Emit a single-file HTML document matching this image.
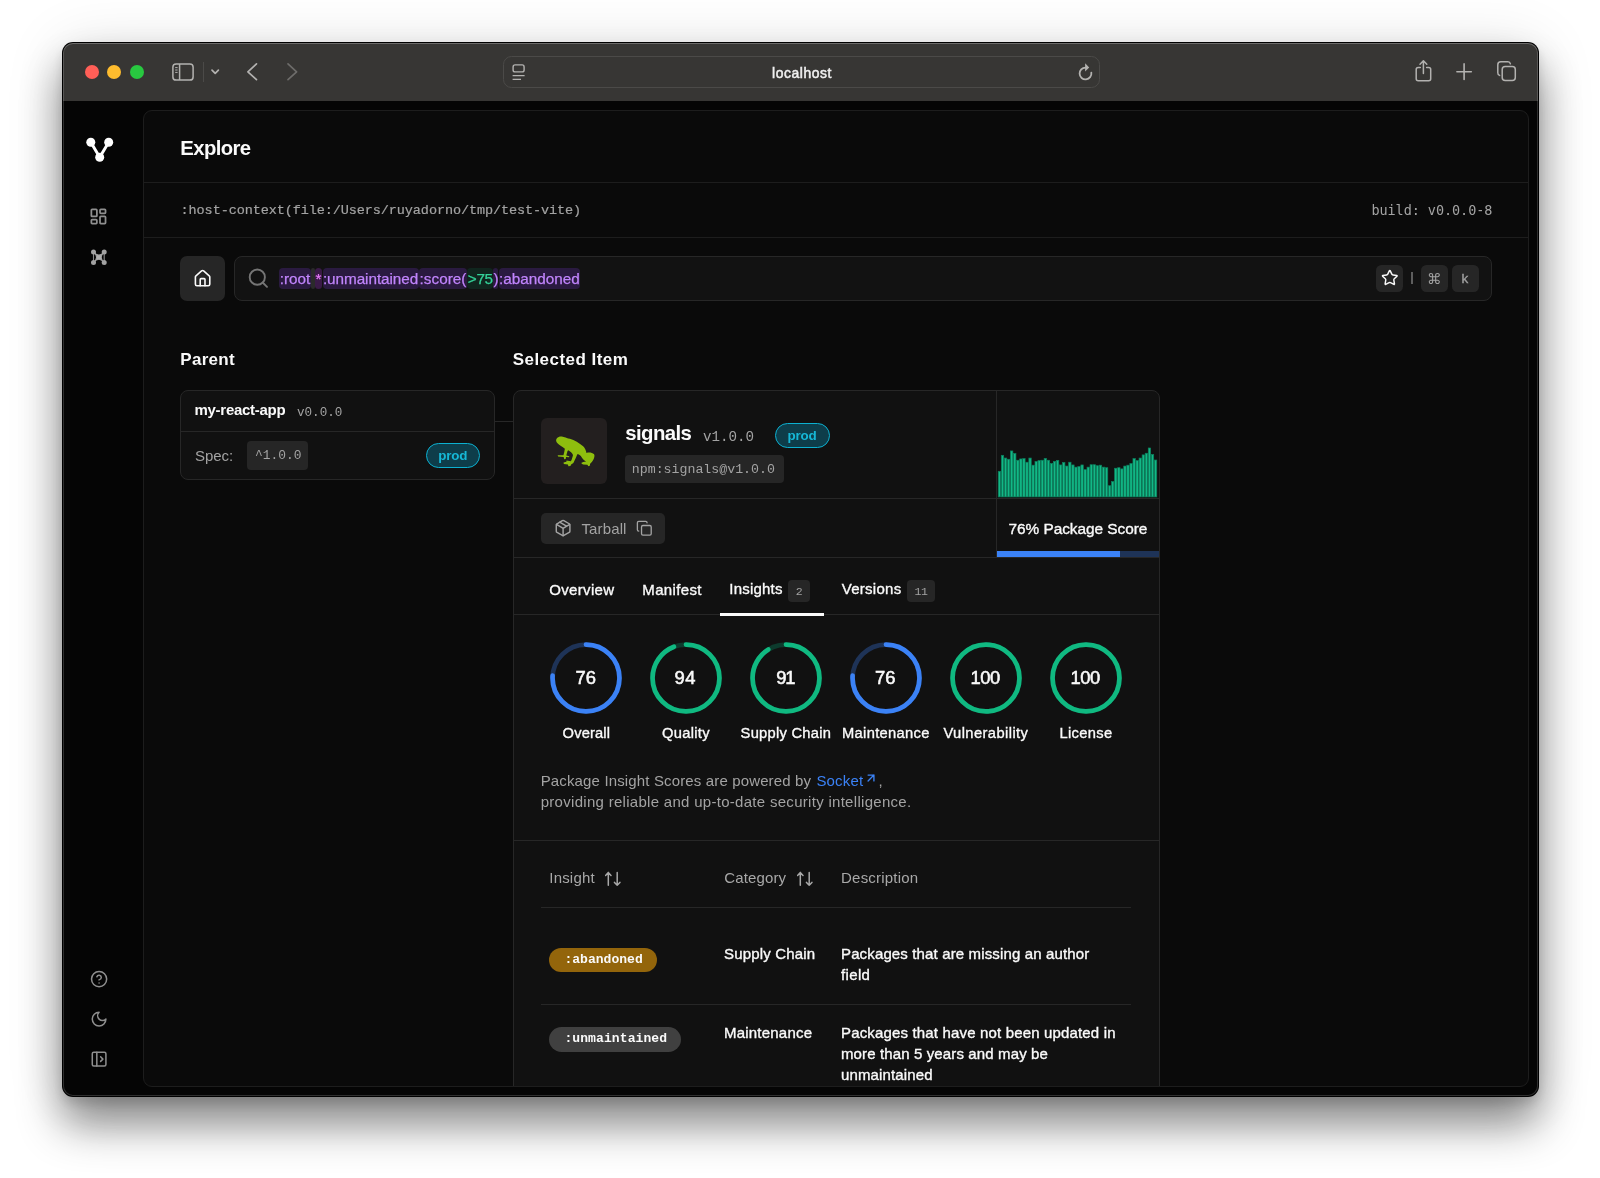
<!DOCTYPE html>
<html lang="en"><head><meta charset="utf-8"><title>Explore</title><style>
html,body{margin:0;padding:0;background:#fff;}
body{width:1600px;height:1178px;position:relative;overflow:hidden;font-family:"Liberation Sans",sans-serif;}
.b{position:absolute;display:block;}
.t{position:absolute;white-space:pre;display:block;}
#win{position:absolute;border-radius:11px;background:#000;box-shadow:0 28px 44px rgba(0,0,0,0.44),0 6px 12px rgba(0,0,0,0.12),0 4px 60px rgba(0,0,0,0.12);}
#root{position:absolute;left:0;top:0;width:1600px;height:1178px;will-change:transform;}
#main{box-sizing:border-box;background:#0a0a0a;border:1px solid #1d1d1d;border-radius:9px;}
</style></head>
<body>
<div id="root">
<div id="win" style="left:62px;top:42px;width:1477px;height:1054.8px;"></div>
<div class="b" style="left:63.00px;top:43.00px;width:1475.00px;height:57.80px;background:#373634;border-radius:10px 10px 0 0;"></div>
<div class="b" style="left:63.00px;top:100.80px;width:1475.00px;height:995.00px;background:#050505;border-radius:0 0 10px 10px;"></div>
<div class="b" style="left:85.10px;top:65.00px;width:14.00px;height:14.00px;background:#ff5f57;border-radius:7px;"></div>
<div class="b" style="left:107.30px;top:65.00px;width:14.00px;height:14.00px;background:#febc2e;border-radius:7px;"></div>
<div class="b" style="left:129.60px;top:65.00px;width:14.00px;height:14.00px;background:#28c840;border-radius:7px;"></div>
<svg class="b" style="left:171.00px;top:62.00px;width:24.00px;height:20.00px;" viewBox="171 62 24 20" fill="none"><rect x="172.9" y="63.9" width="20.2" height="16.2" rx="3.2" stroke="#b3b2b0" stroke-width="1.5"/><path d="M179.6 64v16" stroke="#b3b2b0" stroke-width="1.5"/><path d="M175.2 67.6h2.4M175.2 70h2.4M175.2 72.4h2.4" stroke="#b3b2b0" stroke-width="1" /></svg>
<div class="b" style="left:202.50px;top:62.00px;width:1.00px;height:20.00px;background:#4b4a48;"></div>
<svg class="b" style="left:209.00px;top:67.00px;width:13.00px;height:10.00px;" viewBox="209 67 13 10" fill="none"><path d="M212 70.2l3.2 3.2 3.2-3.2" stroke="#b3b2b0" stroke-width="1.7" stroke-linecap="round" stroke-linejoin="round"/></svg>
<svg class="b" style="left:244.00px;top:60.00px;width:16.00px;height:24.00px;" viewBox="244 60 16 24" fill="none"><path d="M256.5 63.9l-8.6 7.9 8.6 7.9" stroke="#b3b2b0" stroke-width="1.7" stroke-linecap="round" stroke-linejoin="round"/></svg>
<svg class="b" style="left:284.00px;top:60.00px;width:16.00px;height:24.00px;" viewBox="284 60 16 24" fill="none"><path d="M288 63.9l8.6 7.9-8.6 7.9" stroke="#6d6c6a" stroke-width="1.7" stroke-linecap="round" stroke-linejoin="round"/></svg>
<div class="b" style="left:502.50px;top:56.20px;width:597.20px;height:31.70px;background:#373634;border:1.3px solid #4b4a48;border-radius:8.5px;box-sizing:border-box;"></div>
<svg class="b" style="left:510.00px;top:62.00px;width:18.00px;height:20.00px;" viewBox="510 62 18 20" fill="none"><rect x="513.1" y="64.9" width="11" height="7" rx="2" stroke="#b3b2b0" stroke-width="1.4"/><path d="M512.6 75.7h12M512.6 79.3h8.4" stroke="#b3b2b0" stroke-width="1.3"/></svg>
<span id="localhost" class="t" style="left:772.00px;top:66.93px;font:400 13.9px/1 'Liberation Sans', sans-serif;color:#f0f0f0;letter-spacing:0.575px;-webkit-text-stroke:0.5px #f0f0f0;">localhost</span>
<svg class="b" style="left:1076.00px;top:60.00px;width:20.00px;height:24.00px;" viewBox="1076 60 20 24" fill="none"><path d="M1091.34 72.68A5.9 5.9 0 1 1 1085.5 67.6" stroke="#b3b2b0" stroke-width="1.8" stroke-linecap="round"/><path d="M1085.1 63.2L1089.2 67.4L1085.1 71.6Z" fill="#b3b2b0"/></svg>
<svg class="b" style="left:1412.00px;top:58.00px;width:24.00px;height:26.00px;" viewBox="1412 58 24 26" fill="none"><path d="M1420.3 67.5h-2.1a2 2 0 0 0-2 2v9.2a2 2 0 0 0 2 2h10.5a2 2 0 0 0 2-2v-9.2a2 2 0 0 0-2-2h-2.1" stroke="#b3b2b0" stroke-width="1.5" stroke-linecap="round"/><path d="M1423.4 73.6v-12.6M1420 64.2l3.4-3.4 3.4 3.4" stroke="#b3b2b0" stroke-width="1.5" stroke-linecap="round" stroke-linejoin="round"/></svg>
<svg class="b" style="left:1454.00px;top:60.00px;width:20.00px;height:24.00px;" viewBox="1454 60 20 24" fill="none"><path d="M1464.1 63.9v15.6M1456.9 71.7h14.4" stroke="#b3b2b0" stroke-width="1.6" stroke-linecap="round"/></svg>
<svg class="b" style="left:1494.00px;top:58.00px;width:26.00px;height:26.00px;" viewBox="1494 58 26 26" fill="none"><rect x="1502.2" y="66.4" width="13.1" height="14.1" rx="3" fill="#373634" stroke="#b3b2b0" stroke-width="1.5"/><path d="M1499.6 75.4a2.6 2.6 0 0 1-1.8-2.6v-8a3 3 0 0 1 3-3h7a2.6 2.6 0 0 1 2.6 2" stroke="#b3b2b0" stroke-width="1.5" stroke-linecap="round"/></svg>
<svg class="b" style="left:84.00px;top:134.00px;width:32.00px;height:32.00px;" viewBox="84 134 32 32" fill="none"><g fill="#fff" stroke="#fff"><path d="M90.8 142.3L99.7 157.2L108.7 142.3" stroke-width="3" fill="none" stroke-linejoin="round"/><circle cx="90.8" cy="142.3" r="4.5" stroke="none"/><circle cx="108.7" cy="142.3" r="4.5" stroke="none"/><circle cx="99.7" cy="157.3" r="4.5" stroke="none"/></g></svg>
<svg class="b" style="left:89.30px;top:207.45px;width:18.90px;height:18.90px;" viewBox="0 0 24 24" fill="none"><g stroke="#8f8f8f" stroke-width="2.25" stroke-linecap="round" stroke-linejoin="round"><rect width="7" height="9" x="3" y="3" rx="1"/><rect width="7" height="5" x="14" y="3" rx="1"/><rect width="7" height="9" x="14" y="12" rx="1"/><rect width="7" height="5" x="3" y="16" rx="1"/></g></svg>
<svg class="b" style="left:89.00px;top:247.00px;width:20.00px;height:20.00px;" viewBox="89 247 20 20" fill="none"><path d="M93.5 251.9Q98.85 258.5 104.2 251.9Q98 257.2 104.2 262.5Q98.85 255.9 93.5 262.5Q99.9 257.2 93.5 251.9Z" fill="#a2a2a2" stroke="#a2a2a2" stroke-width="1.3" stroke-linejoin="round"/><path d="M93.5 251.9V262.5M104.2 251.9V262.5" stroke="#8a8a8a" stroke-width="1.1"/><rect x="96.9" y="255.3" width="3.9" height="3.9" fill="#b0b0b0"/><g fill="#a2a2a2"><circle cx="93.5" cy="251.9" r="2.5"/><circle cx="104.2" cy="251.9" r="2.5"/><circle cx="93.5" cy="262.5" r="2.5"/><circle cx="104.2" cy="262.5" r="2.5"/></g></svg>
<svg class="b" style="left:89.75px;top:969.80px;width:18.20px;height:18.20px;" viewBox="0 0 24 24" fill="none"><g stroke="#8f8f8f" stroke-width="2" stroke-linecap="round" stroke-linejoin="round"><circle cx="12" cy="12" r="10"/><path d="M9.09 9a3 3 0 0 1 5.83 1c0 2-3 3-3 3"/><path d="M12 17h.01"/></g></svg>
<svg class="b" style="left:89.80px;top:1010.10px;width:18.20px;height:18.20px;" viewBox="0 0 24 24" fill="none"><g stroke="#8f8f8f" stroke-width="2" stroke-linecap="round" stroke-linejoin="round"><path d="M12 3a6 6 0 0 0 9 9 9 9 0 1 1-9-9Z"/></g></svg>
<svg class="b" style="left:89.65px;top:1050.10px;width:18.20px;height:18.20px;" viewBox="0 0 24 24" fill="none"><g stroke="#8f8f8f" stroke-width="2" stroke-linecap="round" stroke-linejoin="round"><rect width="18" height="18" x="3" y="3" rx="2"/><path d="M9 3v18"/><path d="m14 9 3 3-3 3"/></g></svg>
<div class="b" id="main" style="left:143.3px;top:110.2px;width:1385.5px;height:976.5999999999999px;"></div>
<div class="b" id="clip" style="left:144.3px;top:111.2px;width:1383.5px;height:974.5999999999999px;overflow:hidden;border-radius:8px;"><div class="b" style="left:-144.3px;top:-111.2px;width:1600px;height:1178px;">
<span id="explore" class="t" style="left:180.30px;top:138.32px;font:700 20.3px/1 'Liberation Sans', sans-serif;color:#fafafa;letter-spacing:-0.601px;">Explore</span>
<div class="b" style="left:143.30px;top:182.20px;width:1385.50px;height:1.00px;background:#1d1d1d;"></div>
<span id="hostctx" class="t" style="left:180.60px;top:204.05px;font:400 13.5px/1 'Liberation Mono', monospace;color:#a3a3a3;letter-spacing:-0.092px;-webkit-text-stroke:0.2px #a3a3a3;">:host-context(file:/Users/ruyadorno/tmp/test-vite)</span>
<span id="build" class="t" style="left:1371.40px;top:203.80px;font:400 13.5px/1 'DejaVu Sans Mono', 'Liberation Mono', monospace;color:#a3a3a3;letter-spacing:-0.061px;">build: v0.0.0-8</span>
<div class="b" style="left:143.30px;top:236.90px;width:1385.50px;height:1.00px;background:#1d1d1d;"></div>
<div class="b" style="left:180.25px;top:256.25px;width:44.50px;height:44.35px;background:#262626;border-radius:7px;"></div>
<svg class="b" style="left:192.80px;top:268.50px;width:19.20px;height:19.20px;" viewBox="0 0 24 24" fill="none"><g stroke="#fafafa" stroke-width="2" stroke-linecap="round" stroke-linejoin="round"><path d="M15 21v-8a1 1 0 0 0-1-1h-4a1 1 0 0 0-1 1v8"/><path d="M3 10a2 2 0 0 1 .709-1.528l7-5.999a2 2 0 0 1 2.582 0l7 5.999A2 2 0 0 1 21 10v9a2 2 0 0 1-2 2H5a2 2 0 0 1-2-2z"/></g></svg>
<div class="b" style="left:234.10px;top:256.25px;width:1257.80px;height:44.35px;background:#121212;border:1px solid #272727;border-radius:8px;box-sizing:border-box;"></div>
<svg class="b" style="left:247.00px;top:267.00px;width:23.00px;height:23.00px;" viewBox="247 267 23 23" fill="none"><circle cx="257.3" cy="277.15" r="7.6" stroke="#757575" stroke-width="1.9"/><path d="M262.9 282.75l4.1 4.1" stroke="#757575" stroke-width="1.9" stroke-linecap="round"/></svg>
<div class="b" style="left:279.40px;top:268.00px;width:31.20px;height:21.20px;background:#2a1a40;border-radius:4px;"></div>
<div class="b" style="left:311.20px;top:268.00px;width:3.80px;height:21.20px;background:#2a2a2a;border-radius:4px;"></div>
<div class="b" style="left:315.00px;top:268.00px;width:7.00px;height:21.20px;background:#3a1a47;border-radius:4px;"></div>
<div class="b" style="left:322.50px;top:268.00px;width:96.10px;height:21.20px;background:#2a1a40;border-radius:4px;"></div>
<div class="b" style="left:419.20px;top:268.00px;width:47.60px;height:21.20px;background:#2a1a40;border-radius:4px;"></div>
<div class="b" style="left:467.40px;top:268.00px;width:25.80px;height:21.20px;background:#10261e;border-radius:4px;"></div>
<div class="b" style="left:493.20px;top:268.00px;width:5.00px;height:21.20px;background:#2a1a40;border-radius:4px;"></div>
<div class="b" style="left:498.70px;top:268.00px;width:81.50px;height:21.20px;background:#2a1a40;border-radius:4px;"></div>
<span id="q0" class="t" style="left:279.80px;top:270.65px;font:400 15.3px/1 'Liberation Sans', sans-serif;color:#c084fc;letter-spacing:-0.042px;-webkit-text-stroke:0.25px #c084fc;">:root</span>
<span id="q2" class="t" style="left:315.40px;top:270.65px;font:400 15.3px/1 'Liberation Sans', sans-serif;color:#e879f9;letter-spacing:0.247px;-webkit-text-stroke:0.25px #e879f9;">*</span>
<span id="q3" class="t" style="left:322.90px;top:270.65px;font:400 15.3px/1 'Liberation Sans', sans-serif;color:#c084fc;letter-spacing:-0.062px;-webkit-text-stroke:0.25px #c084fc;">:unmaintained</span>
<span id="q4" class="t" style="left:419.60px;top:270.65px;font:400 15.3px/1 'Liberation Sans', sans-serif;color:#c084fc;letter-spacing:0.007px;-webkit-text-stroke:0.25px #c084fc;">:score(</span>
<span id="q5" class="t" style="left:467.80px;top:270.65px;font:400 15.3px/1 'Liberation Sans', sans-serif;color:#34d399;letter-spacing:-0.318px;-webkit-text-stroke:0.25px #34d399;">&gt;75</span>
<span id="q6" class="t" style="left:493.60px;top:270.65px;font:400 15.3px/1 'Liberation Sans', sans-serif;color:#c084fc;letter-spacing:-0.909px;-webkit-text-stroke:0.25px #c084fc;">)</span>
<span id="q7" class="t" style="left:499.10px;top:270.65px;font:400 15.3px/1 'Liberation Sans', sans-serif;color:#c084fc;letter-spacing:-0.013px;-webkit-text-stroke:0.25px #c084fc;">:abandoned</span>
<div class="b" style="left:1376.25px;top:265.00px;width:26.65px;height:26.50px;background:#262626;border-radius:5.5px;"></div>
<svg class="b" style="left:1381.00px;top:269.30px;width:17.60px;height:17.60px;" viewBox="0 0 24 24" fill="none"><g stroke="#fafafa" stroke-width="2" stroke-linecap="round" stroke-linejoin="round"><path d="M11.525 2.295a.53.53 0 0 1 .95 0l2.31 4.679a2.123 2.123 0 0 0 1.595 1.16l5.166.756a.53.53 0 0 1 .294.904l-3.736 3.638a2.123 2.123 0 0 0-.611 1.878l.882 5.14a.53.53 0 0 1-.771.56l-4.618-2.428a2.122 2.122 0 0 0-1.973 0L6.396 21.01a.53.53 0 0 1-.77-.56l.881-5.139a2.122 2.122 0 0 0-.611-1.879L2.16 9.795a.53.53 0 0 1 .294-.906l5.165-.755a2.122 2.122 0 0 0 1.597-1.16z"/></g></svg>
<div class="b" style="left:1411.25px;top:271.90px;width:1.30px;height:12.50px;background:#5e5e5e;"></div>
<div class="b" style="left:1421.00px;top:265.00px;width:26.50px;height:26.50px;background:#262626;border-radius:5.5px;"></div>
<div class="b" style="left:1452.10px;top:265.00px;width:26.65px;height:26.50px;background:#262626;border-radius:5.5px;"></div>
<span id="cmd" class="t" style="left:1427.00px;top:271.92px;font:400 14.6px/1 'DejaVu Sans', sans-serif;color:#a3a3a3;">⌘</span>
<span id="kk" class="t" style="left:1461.60px;top:271.67px;font:400 13.5px/1 'Liberation Sans', sans-serif;color:#a3a3a3;-webkit-text-stroke:0.3px #a3a3a3;">k</span>
<span id="parent" class="t" style="left:180.30px;top:350.91px;font:700 17px/1 'Liberation Sans', sans-serif;color:#fafafa;letter-spacing:0.280px;">Parent</span>
<span id="selitem" class="t" style="left:512.70px;top:350.91px;font:700 17px/1 'Liberation Sans', sans-serif;color:#fafafa;letter-spacing:0.461px;">Selected Item</span>
<div class="b" style="left:180.20px;top:390.00px;width:314.50px;height:90.30px;background:#111111;border:1px solid #272727;border-radius:8px;box-sizing:border-box;"></div>
<div class="b" style="left:181.00px;top:430.70px;width:313.00px;height:1.00px;background:#272727;"></div>
<span id="myreact" class="t" style="left:194.50px;top:402.20px;font:700 15px/1 'Liberation Sans', sans-serif;color:#fafafa;letter-spacing:-0.284px;">my-react-app</span>
<span id="v000" class="t" style="left:297.00px;top:406.54px;font:400 12.6px/1 'Liberation Mono', monospace;color:#a3a3a3;letter-spacing:-0.010px;">v0.0.0</span>
<span id="spec" class="t" style="left:195.00px;top:448.40px;font:400 15px/1 'Liberation Sans', sans-serif;color:#a3a3a3;letter-spacing:-0.032px;">Spec:</span>
<div class="b" style="left:247.00px;top:441.40px;width:61.30px;height:28.30px;background:#262626;border-radius:4px;"></div>
<span id="caret" class="t" style="left:254.90px;top:449.51px;font:400 12.9px/1 'Liberation Mono', monospace;color:#a3a3a3;letter-spacing:0.030px;">^1.0.0</span>
<div class="b" style="left:425.50px;top:443.00px;width:54.70px;height:24.90px;background:#0e3d4a;border:1.6px solid #0cb0d0;border-radius:13px;box-sizing:border-box;"></div>
<span id="prod1" class="t" style="left:438.30px;top:449.06px;font:700 13.4px/1 'Liberation Sans', sans-serif;color:#16b7d6;letter-spacing:-0.188px;">prod</span>
<div class="b" style="left:494.70px;top:421.20px;width:18.30px;height:1.00px;background:#272727;"></div>
<div class="b" style="left:513.00px;top:390.00px;width:646.50px;height:810.00px;background:#111111;border:1px solid #272727;border-radius:8px;box-sizing:border-box;"></div>
<div class="b" style="left:996.00px;top:391.00px;width:1.00px;height:166.40px;background:#272727;"></div>
<div class="b" style="left:514.00px;top:498.00px;width:645.00px;height:1.00px;background:#272727;"></div>
<div class="b" style="left:514.00px;top:557.00px;width:645.00px;height:1.00px;background:#272727;"></div>
<div class="b" style="left:541.10px;top:418.30px;width:65.70px;height:65.90px;background:#231f1f;border-radius:6px;"></div>
<svg class="b" style="left:548.00px;top:428.00px;width:54.00px;height:46.00px;" viewBox="0 0 1383 1178" fill="none"><path d="M330 215C400 215 440 245 560 275C680 310 800 380 900 470C950 520 975 590 985 640C1040 620 1130 625 1180 670C1200 700 1190 760 1150 830C1120 880 1085 900 1075 920L1078 960L1035 978L1008 938L900 932L862 918L858 893L905 872L975 858C920 830 870 770 840 715C810 685 775 668 750 672C730 720 700 800 650 895L592 932L575 975L522 978L510 932L405 922L398 882L470 862L476 830L585 852C615 800 635 720 640 690C620 640 570 600 520 572L500 590C485 640 478 680 470 702L545 722L540 752L462 742L452 795L418 800L400 742L258 732L248 700L395 698C410 640 425 580 432 530C370 490 290 440 250 400C200 350 190 290 240 250C270 225 300 215 330 215Z" fill="#8ebe0e"/></svg>
<span id="signals" class="t" style="left:625.20px;top:422.83px;font:700 20.4px/1 'Liberation Sans', sans-serif;color:#fafafa;letter-spacing:-0.581px;">signals</span>
<span id="v100" class="t" style="left:702.90px;top:430.22px;font:400 14.2px/1 'Liberation Mono', monospace;color:#a3a3a3;letter-spacing:0.018px;">v1.0.0</span>
<div class="b" style="left:774.90px;top:423.10px;width:55.00px;height:24.90px;background:#0e3d4a;border:1.6px solid #0cb0d0;border-radius:13px;box-sizing:border-box;"></div>
<span id="prod2" class="t" style="left:787.40px;top:429.26px;font:700 13.4px/1 'Liberation Sans', sans-serif;color:#16b7d6;letter-spacing:-0.138px;">prod</span>
<div class="b" style="left:624.90px;top:454.60px;width:158.80px;height:28.60px;background:#262626;border-radius:4px;"></div>
<span id="npm" class="t" style="left:631.80px;top:462.84px;font:400 13.25px/1 'Liberation Mono', monospace;color:#a3a3a3;letter-spacing:-0.001px;">npm:signals@v1.0.0</span>
<div class="b" style="left:540.90px;top:513.00px;width:124.60px;height:30.75px;background:#262626;border-radius:5px;"></div>
<svg class="b" style="left:553.70px;top:519.10px;width:18.20px;height:18.20px;" viewBox="0 0 24 24" fill="none"><g stroke="#a3a3a3" stroke-width="1.9" stroke-linecap="round" stroke-linejoin="round"><path d="M11 21.73a2 2 0 0 0 2 0l7-4A2 2 0 0 0 21 16V8a2 2 0 0 0-1-1.73l-7-4a2 2 0 0 0-2 0l-7 4A2 2 0 0 0 3 8v8a2 2 0 0 0 1 1.73z"/><path d="M12 22V12"/><path d="m3.3 7 7.703 4.734a2 2 0 0 0 1.994 0L20.7 7"/><path d="m7.500 4.270 9 5.150"/></g></svg>
<span id="tarball" class="t" style="left:581.40px;top:521.10px;font:400 15px/1 'Liberation Sans', sans-serif;color:#a3a3a3;letter-spacing:0.145px;">Tarball</span>
<svg class="b" style="left:635.80px;top:519.80px;width:16.60px;height:16.60px;" viewBox="0 0 24 24" fill="none"><g stroke="#a3a3a3" stroke-width="1.9" stroke-linecap="round" stroke-linejoin="round"><rect width="14" height="14" x="8" y="8" rx="2" ry="2"/><path d="M4 16c-1.100 0-2-.9-2-2V4c0-1.100.9-2 2-2h10c1.100 0 2 .9 2 2"/></g></svg>
<svg class="b" style="left:997.00px;top:430.00px;width:162.00px;height:68.00px;" viewBox="997 430 162 68" fill="none"><rect x="998.25" y="471.30" width="2.36" height="25.60" fill="#12b886" stroke="#0c7f5d" stroke-width="0.7"/><rect x="1001.31" y="455.32" width="2.36" height="41.58" fill="#12b886" stroke="#0c7f5d" stroke-width="0.7"/><rect x="1004.37" y="458.06" width="2.36" height="38.84" fill="#12b886" stroke="#0c7f5d" stroke-width="0.7"/><rect x="1007.43" y="459.26" width="2.36" height="37.64" fill="#12b886" stroke="#0c7f5d" stroke-width="0.7"/><rect x="1010.50" y="450.95" width="2.36" height="45.95" fill="#12b886" stroke="#0c7f5d" stroke-width="0.7"/><rect x="1013.56" y="453.46" width="2.36" height="43.44" fill="#12b886" stroke="#0c7f5d" stroke-width="0.7"/><rect x="1016.62" y="460.25" width="2.36" height="36.65" fill="#12b886" stroke="#0c7f5d" stroke-width="0.7"/><rect x="1019.68" y="458.94" width="2.36" height="37.96" fill="#12b886" stroke="#0c7f5d" stroke-width="0.7"/><rect x="1022.74" y="458.61" width="2.36" height="38.29" fill="#12b886" stroke="#0c7f5d" stroke-width="0.7"/><rect x="1025.80" y="462.22" width="2.36" height="34.68" fill="#12b886" stroke="#0c7f5d" stroke-width="0.7"/><rect x="1028.87" y="458.06" width="2.36" height="38.84" fill="#12b886" stroke="#0c7f5d" stroke-width="0.7"/><rect x="1031.93" y="465.17" width="2.36" height="31.73" fill="#12b886" stroke="#0c7f5d" stroke-width="0.7"/><rect x="1034.99" y="461.45" width="2.36" height="35.45" fill="#12b886" stroke="#0c7f5d" stroke-width="0.7"/><rect x="1038.05" y="460.58" width="2.36" height="36.32" fill="#12b886" stroke="#0c7f5d" stroke-width="0.7"/><rect x="1041.11" y="460.25" width="2.36" height="36.65" fill="#12b886" stroke="#0c7f5d" stroke-width="0.7"/><rect x="1044.17" y="458.39" width="2.36" height="38.51" fill="#12b886" stroke="#0c7f5d" stroke-width="0.7"/><rect x="1047.23" y="460.25" width="2.36" height="36.65" fill="#12b886" stroke="#0c7f5d" stroke-width="0.7"/><rect x="1050.30" y="463.53" width="2.36" height="33.37" fill="#12b886" stroke="#0c7f5d" stroke-width="0.7"/><rect x="1053.36" y="461.45" width="2.36" height="35.45" fill="#12b886" stroke="#0c7f5d" stroke-width="0.7"/><rect x="1056.42" y="460.36" width="2.36" height="36.54" fill="#12b886" stroke="#0c7f5d" stroke-width="0.7"/><rect x="1059.48" y="464.95" width="2.36" height="31.95" fill="#12b886" stroke="#0c7f5d" stroke-width="0.7"/><rect x="1062.54" y="462.44" width="2.36" height="34.46" fill="#12b886" stroke="#0c7f5d" stroke-width="0.7"/><rect x="1065.60" y="466.05" width="2.36" height="30.85" fill="#12b886" stroke="#0c7f5d" stroke-width="0.7"/><rect x="1068.67" y="462.22" width="2.36" height="34.68" fill="#12b886" stroke="#0c7f5d" stroke-width="0.7"/><rect x="1071.73" y="464.95" width="2.36" height="31.95" fill="#12b886" stroke="#0c7f5d" stroke-width="0.7"/><rect x="1074.79" y="467.14" width="2.36" height="29.76" fill="#12b886" stroke="#0c7f5d" stroke-width="0.7"/><rect x="1077.85" y="466.59" width="2.36" height="30.31" fill="#12b886" stroke="#0c7f5d" stroke-width="0.7"/><rect x="1080.91" y="464.95" width="2.36" height="31.95" fill="#12b886" stroke="#0c7f5d" stroke-width="0.7"/><rect x="1083.97" y="469.66" width="2.36" height="27.24" fill="#12b886" stroke="#0c7f5d" stroke-width="0.7"/><rect x="1087.03" y="467.14" width="2.36" height="29.76" fill="#12b886" stroke="#0c7f5d" stroke-width="0.7"/><rect x="1090.10" y="464.73" width="2.36" height="32.17" fill="#12b886" stroke="#0c7f5d" stroke-width="0.7"/><rect x="1093.16" y="464.73" width="2.36" height="32.17" fill="#12b886" stroke="#0c7f5d" stroke-width="0.7"/><rect x="1096.22" y="465.72" width="2.36" height="31.18" fill="#12b886" stroke="#0c7f5d" stroke-width="0.7"/><rect x="1099.28" y="465.17" width="2.36" height="31.73" fill="#12b886" stroke="#0c7f5d" stroke-width="0.7"/><rect x="1102.34" y="467.14" width="2.36" height="29.76" fill="#12b886" stroke="#0c7f5d" stroke-width="0.7"/><rect x="1105.40" y="467.69" width="2.36" height="29.21" fill="#12b886" stroke="#0c7f5d" stroke-width="0.7"/><rect x="1108.47" y="485.74" width="2.36" height="11.16" fill="#12b886" stroke="#0c7f5d" stroke-width="0.7"/><rect x="1111.53" y="481.58" width="2.36" height="15.32" fill="#12b886" stroke="#0c7f5d" stroke-width="0.7"/><rect x="1114.59" y="468.23" width="2.36" height="28.67" fill="#12b886" stroke="#0c7f5d" stroke-width="0.7"/><rect x="1117.65" y="467.69" width="2.36" height="29.21" fill="#12b886" stroke="#0c7f5d" stroke-width="0.7"/><rect x="1120.71" y="468.89" width="2.36" height="28.01" fill="#12b886" stroke="#0c7f5d" stroke-width="0.7"/><rect x="1123.77" y="466.05" width="2.36" height="30.85" fill="#12b886" stroke="#0c7f5d" stroke-width="0.7"/><rect x="1126.83" y="465.17" width="2.36" height="31.73" fill="#12b886" stroke="#0c7f5d" stroke-width="0.7"/><rect x="1129.90" y="463.53" width="2.36" height="33.37" fill="#12b886" stroke="#0c7f5d" stroke-width="0.7"/><rect x="1132.96" y="458.61" width="2.36" height="38.29" fill="#12b886" stroke="#0c7f5d" stroke-width="0.7"/><rect x="1136.02" y="460.58" width="2.36" height="36.32" fill="#12b886" stroke="#0c7f5d" stroke-width="0.7"/><rect x="1139.08" y="458.06" width="2.36" height="38.84" fill="#12b886" stroke="#0c7f5d" stroke-width="0.7"/><rect x="1142.14" y="454.89" width="2.36" height="42.01" fill="#12b886" stroke="#0c7f5d" stroke-width="0.7"/><rect x="1145.20" y="453.25" width="2.36" height="43.65" fill="#12b886" stroke="#0c7f5d" stroke-width="0.7"/><rect x="1148.27" y="447.99" width="2.36" height="48.91" fill="#12b886" stroke="#0c7f5d" stroke-width="0.7"/><rect x="1151.33" y="454.56" width="2.36" height="42.34" fill="#12b886" stroke="#0c7f5d" stroke-width="0.7"/><rect x="1154.39" y="460.03" width="2.36" height="36.87" fill="#12b886" stroke="#0c7f5d" stroke-width="0.7"/></svg>
<span id="score" class="t" style="left:1008.50px;top:520.96px;font:400 15.4px/1 'Liberation Sans', sans-serif;color:#fafafa;letter-spacing:-0.039px;-webkit-text-stroke:0.35px #fafafa;">76% Package Score</span>
<div class="b" style="left:997.00px;top:550.70px;width:162.00px;height:6.50px;background:#1e3357;"></div>
<div class="b" style="left:997.00px;top:550.70px;width:122.90px;height:6.50px;background:#3b82f6;"></div>
<span id="tab1" class="t" style="left:549.30px;top:582.20px;font:400 15px/1 'Liberation Sans', sans-serif;color:#fafafa;letter-spacing:0.323px;-webkit-text-stroke:0.35px #fafafa;">Overview</span>
<span id="tab2" class="t" style="left:642.30px;top:582.20px;font:400 15px/1 'Liberation Sans', sans-serif;color:#fafafa;letter-spacing:0.362px;-webkit-text-stroke:0.35px #fafafa;">Manifest</span>
<span id="tab3" class="t" style="left:729.30px;top:581.30px;font:400 15px/1 'Liberation Sans', sans-serif;color:#fafafa;letter-spacing:0.212px;-webkit-text-stroke:0.35px #fafafa;">Insights</span>
<div class="b" style="left:788.40px;top:580.00px;width:21.90px;height:21.60px;background:#262626;border-radius:4px;"></div>
<span id="tab3n" class="t" style="left:795.70px;top:586.19px;font:400 11.5px/1 'Liberation Mono', monospace;color:#a3a3a3;letter-spacing:-0.406px;">2</span>
<span id="tab4" class="t" style="left:841.80px;top:581.30px;font:400 15px/1 'Liberation Sans', sans-serif;color:#fafafa;letter-spacing:0.257px;-webkit-text-stroke:0.35px #fafafa;">Versions</span>
<div class="b" style="left:906.90px;top:580.00px;width:28.40px;height:21.60px;background:#262626;border-radius:4px;"></div>
<span id="tab4n" class="t" style="left:914.40px;top:586.19px;font:400 11.5px/1 'Liberation Mono', monospace;color:#a3a3a3;letter-spacing:-0.206px;">11</span>
<div class="b" style="left:514.00px;top:613.70px;width:645.00px;height:1.00px;background:#272727;"></div>
<div class="b" style="left:720.20px;top:613.10px;width:103.80px;height:2.50px;background:#fafafa;"></div>
<svg class="b" style="left:546.40px;top:637.80px;width:80.00px;height:80.00px;" viewBox="546.4 637.8 80 80" fill="none"><circle cx="586.4" cy="677.8" r="33.45" stroke="#1e3357" stroke-width="4.7"/><circle cx="586.4" cy="677.8" r="33.45" stroke="#3b82f6" stroke-width="4.7" stroke-linecap="round" stroke-dasharray="159.73 210.17" transform="rotate(-90 586.4 677.8)"/></svg>
<span id="g1n" class="t" style="left:575.60px;top:668.82px;font:400 18.4px/1 'Liberation Sans', sans-serif;color:#fafafa;letter-spacing:-0.134px;-webkit-text-stroke:0.55px #fafafa;">76</span>
<span id="g1l" class="t" style="left:562.60px;top:725.76px;font:400 14.7px/1 'Liberation Sans', sans-serif;color:#fafafa;letter-spacing:0.153px;-webkit-text-stroke:0.35px #fafafa;">Overall</span>
<svg class="b" style="left:645.90px;top:637.80px;width:80.00px;height:80.00px;" viewBox="645.9 637.8 80 80" fill="none"><circle cx="685.9" cy="677.8" r="33.45" stroke="#0d3b2d" stroke-width="4.7"/><circle cx="685.9" cy="677.8" r="33.45" stroke="#10b981" stroke-width="4.7" stroke-linecap="round" stroke-dasharray="197.56 210.17" transform="rotate(-90 685.9 677.8)"/></svg>
<span id="g2n" class="t" style="left:674.45px;top:668.82px;font:400 18.4px/1 'Liberation Sans', sans-serif;color:#fafafa;letter-spacing:0.516px;-webkit-text-stroke:0.55px #fafafa;">94</span>
<span id="g2l" class="t" style="left:661.95px;top:725.76px;font:400 14.7px/1 'Liberation Sans', sans-serif;color:#fafafa;letter-spacing:0.312px;-webkit-text-stroke:0.35px #fafafa;">Quality</span>
<svg class="b" style="left:745.90px;top:637.80px;width:80.00px;height:80.00px;" viewBox="745.9 637.8 80 80" fill="none"><circle cx="785.9" cy="677.8" r="33.45" stroke="#0d3b2d" stroke-width="4.7"/><circle cx="785.9" cy="677.8" r="33.45" stroke="#10b981" stroke-width="4.7" stroke-linecap="round" stroke-dasharray="191.26 210.17" transform="rotate(-90 785.9 677.8)"/></svg>
<span id="g3n" class="t" style="left:776.20px;top:668.82px;font:400 18.4px/1 'Liberation Sans', sans-serif;color:#fafafa;letter-spacing:-1.234px;-webkit-text-stroke:0.55px #fafafa;">91</span>
<span id="g3l" class="t" style="left:740.60px;top:725.76px;font:400 14.7px/1 'Liberation Sans', sans-serif;color:#fafafa;letter-spacing:0.269px;-webkit-text-stroke:0.35px #fafafa;">Supply Chain</span>
<svg class="b" style="left:845.90px;top:637.80px;width:80.00px;height:80.00px;" viewBox="845.9 637.8 80 80" fill="none"><circle cx="885.9" cy="677.8" r="33.45" stroke="#1e3357" stroke-width="4.7"/><circle cx="885.9" cy="677.8" r="33.45" stroke="#3b82f6" stroke-width="4.7" stroke-linecap="round" stroke-dasharray="159.73 210.17" transform="rotate(-90 885.9 677.8)"/></svg>
<span id="g4n" class="t" style="left:875.10px;top:668.82px;font:400 18.4px/1 'Liberation Sans', sans-serif;color:#fafafa;letter-spacing:-0.134px;-webkit-text-stroke:0.55px #fafafa;">76</span>
<span id="g4l" class="t" style="left:842.00px;top:725.76px;font:400 14.7px/1 'Liberation Sans', sans-serif;color:#fafafa;letter-spacing:0.336px;-webkit-text-stroke:0.35px #fafafa;">Maintenance</span>
<svg class="b" style="left:945.90px;top:637.80px;width:80.00px;height:80.00px;" viewBox="945.9 637.8 80 80" fill="none"><circle cx="985.9" cy="677.8" r="33.45" stroke="#0d3b2d" stroke-width="4.7"/><circle cx="985.9" cy="677.8" r="33.45" stroke="#10b981" stroke-width="4.7"/></svg>
<span id="g5n" class="t" style="left:970.40px;top:668.82px;font:400 18.4px/1 'Liberation Sans', sans-serif;color:#fafafa;letter-spacing:-0.362px;-webkit-text-stroke:0.55px #fafafa;">100</span>
<span id="g5l" class="t" style="left:943.40px;top:725.76px;font:400 14.7px/1 'Liberation Sans', sans-serif;color:#fafafa;letter-spacing:0.425px;-webkit-text-stroke:0.35px #fafafa;">Vulnerability</span>
<svg class="b" style="left:1045.90px;top:637.80px;width:80.00px;height:80.00px;" viewBox="1045.9 637.8 80 80" fill="none"><circle cx="1085.9" cy="677.8" r="33.45" stroke="#0d3b2d" stroke-width="4.7"/><circle cx="1085.9" cy="677.8" r="33.45" stroke="#10b981" stroke-width="4.7"/></svg>
<span id="g6n" class="t" style="left:1070.40px;top:668.82px;font:400 18.4px/1 'Liberation Sans', sans-serif;color:#fafafa;letter-spacing:-0.362px;-webkit-text-stroke:0.55px #fafafa;">100</span>
<span id="g6l" class="t" style="left:1059.40px;top:725.76px;font:400 14.7px/1 'Liberation Sans', sans-serif;color:#fafafa;letter-spacing:0.339px;-webkit-text-stroke:0.35px #fafafa;">License</span>
<span id="p1a" class="t" style="left:540.70px;top:773.10px;font:400 15px/1 'Liberation Sans', sans-serif;color:#a3a3a3;letter-spacing:0.144px;">Package Insight Scores are powered by</span>
<span id="p1b" class="t" style="left:816.40px;top:773.10px;font:400 15px/1 'Liberation Sans', sans-serif;color:#3b82f6;letter-spacing:0.173px;">Socket</span>
<svg class="b" style="left:863.60px;top:771.40px;width:14.00px;height:14.00px;" viewBox="0 0 24 24" fill="none"><path d="M7 7h10v10M7 17L17 7" stroke="#3b82f6" stroke-width="2.3" stroke-linecap="round" stroke-linejoin="round"/></svg>
<span id="p1c" class="t" style="left:878.60px;top:773.10px;font:400 15px/1 'Liberation Sans', sans-serif;color:#a3a3a3;">,</span>
<span id="p2" class="t" style="left:540.70px;top:794.20px;font:400 15px/1 'Liberation Sans', sans-serif;color:#a3a3a3;letter-spacing:0.292px;">providing reliable and up-to-date security intelligence.</span>
<div class="b" style="left:514.00px;top:839.70px;width:645.00px;height:1.00px;background:#272727;"></div>
<span id="th1" class="t" style="left:549.30px;top:870.40px;font:400 15px/1 'Liberation Sans', sans-serif;color:#a8a8a8;letter-spacing:0.185px;">Insight</span>
<svg class="b" style="left:605.20px;top:871.00px;width:16.00px;height:16.00px;" viewBox="0 0 16 16" fill="none"><path d="M3.3 14.2V1.6M0.6 4.4L3.3 1.6L6 4.4M12.2 1.6v12.6M9.5 11.4l2.7 2.8 2.7-2.8" stroke="#a8a8a8" stroke-width="1.5" stroke-linecap="round" stroke-linejoin="round"/></svg>
<span id="th2" class="t" style="left:724.20px;top:870.40px;font:400 15px/1 'Liberation Sans', sans-serif;color:#a8a8a8;letter-spacing:0.153px;">Category</span>
<svg class="b" style="left:796.90px;top:871.00px;width:16.00px;height:16.00px;" viewBox="0 0 16 16" fill="none"><path d="M3.3 14.2V1.6M0.6 4.4L3.3 1.6L6 4.4M12.2 1.6v12.6M9.5 11.4l2.7 2.8 2.7-2.8" stroke="#a8a8a8" stroke-width="1.5" stroke-linecap="round" stroke-linejoin="round"/></svg>
<span id="th3" class="t" style="left:841.10px;top:870.40px;font:400 15px/1 'Liberation Sans', sans-serif;color:#a8a8a8;letter-spacing:0.197px;">Description</span>
<div class="b" style="left:540.60px;top:906.50px;width:590.90px;height:1.00px;background:#272727;"></div>
<div class="b" style="left:549.20px;top:947.80px;width:107.40px;height:24.50px;background:#93650b;border-radius:12.5px;"></div>
<span id="b1" class="t" style="left:564.40px;top:953.00px;font:700 13.05px/1 'Liberation Mono', monospace;color:#fafafa;letter-spacing:0.010px;">:abandoned</span>
<span id="r1c" class="t" style="left:724.00px;top:946.40px;font:400 15px/1 'Liberation Sans', sans-serif;color:#fafafa;letter-spacing:0.164px;-webkit-text-stroke:0.35px #fafafa;">Supply Chain</span>
<span id="r1d1" class="t" style="left:841.00px;top:946.40px;font:400 15px/1 'Liberation Sans', sans-serif;color:#fafafa;letter-spacing:0.138px;-webkit-text-stroke:0.35px #fafafa;">Packages that are missing an author</span>
<span id="r1d2" class="t" style="left:841.00px;top:967.30px;font:400 15px/1 'Liberation Sans', sans-serif;color:#fafafa;letter-spacing:0.354px;-webkit-text-stroke:0.35px #fafafa;">field</span>
<div class="b" style="left:540.60px;top:1003.90px;width:590.90px;height:1.00px;background:#272727;"></div>
<div class="b" style="left:549.20px;top:1027.00px;width:131.90px;height:24.60px;background:#404040;border-radius:12.5px;"></div>
<span id="b2" class="t" style="left:564.40px;top:1032.20px;font:700 13.05px/1 'Liberation Mono', monospace;color:#fafafa;letter-spacing:0.077px;">:unmaintained</span>
<span id="r2c" class="t" style="left:724.00px;top:1025.40px;font:400 15px/1 'Liberation Sans', sans-serif;color:#fafafa;letter-spacing:0.209px;-webkit-text-stroke:0.35px #fafafa;">Maintenance</span>
<span id="r2d1" class="t" style="left:841.00px;top:1025.40px;font:400 15px/1 'Liberation Sans', sans-serif;color:#fafafa;letter-spacing:0.162px;-webkit-text-stroke:0.35px #fafafa;">Packages that have not been updated in</span>
<span id="r2d2" class="t" style="left:841.00px;top:1046.30px;font:400 15px/1 'Liberation Sans', sans-serif;color:#fafafa;letter-spacing:0.127px;-webkit-text-stroke:0.35px #fafafa;">more than 5 years and may be</span>
<span id="r2d3" class="t" style="left:841.00px;top:1067.40px;font:400 15px/1 'Liberation Sans', sans-serif;color:#fafafa;letter-spacing:0.135px;-webkit-text-stroke:0.35px #fafafa;">unmaintained</span>
</div></div>
<div class="b" style="left:63.00px;top:43.00px;width:1475.00px;height:1052.80px;border-radius:10px;box-shadow:inset 0 0 0 1px rgba(255,255,255,0.17), inset 0 1px 0 0 rgba(255,255,255,0.12);pointer-events:none;"></div>
</div>
</body></html>
